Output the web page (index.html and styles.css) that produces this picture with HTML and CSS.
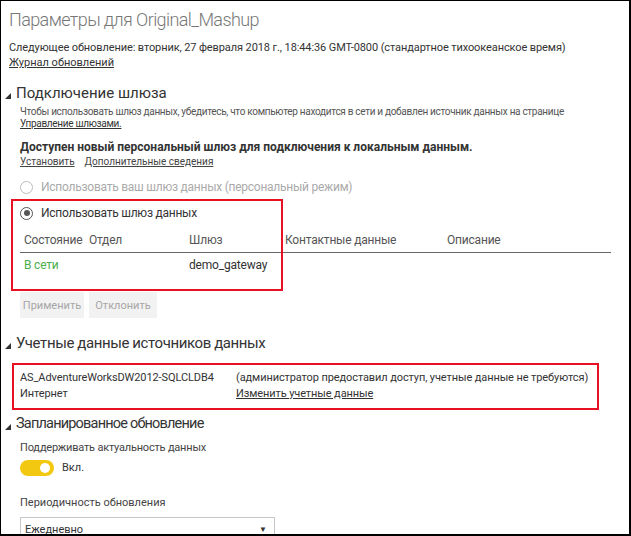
FILE: index.html
```html
<!DOCTYPE html>
<html lang="ru">
<head>
<meta charset="utf-8">
<title>Параметры для Original_Mashup</title>
<link rel="stylesheet" href="styles.css">
</head>
<body>
<div class="frame">
  <h1 class="title">Параметры для Original_Mashup</h1>
  <p class="next">Следующее обновление: вторник, 27 февраля 2018 г., 18:44:36 GMT-0800 (стандартное тихоокеанское время)</p>
  <a class="link next-link" href="#">Журнал обновлений</a>

  <h2 class="sec sec-gw"><svg class="tri" width="6" height="6" viewBox="0 0 6 6"><polygon points="0,6 6,0 6,6" fill="#333"/></svg>Подключение шлюза</h2>
  <div class="body">
    <p class="desc">Чтобы использовать шлюз данных, убедитесь, что компьютер находится в сети и добавлен источник данных на странице</p>
    <a class="desc-link" href="#">Управление шлюзами.</a>
    <p class="notice">Доступен новый персональный шлюз для подключения к локальным данным.</p>
    <div class="notice-links"><a href="#">Установить</a><a href="#">Дополнительные сведения</a></div>

    <label class="radio disabled"><span class="dot"></span>Использовать ваш шлюз данных (персональный режим)</label>
    <label class="radio checked"><span class="dot"></span>Использовать шлюз данных</label>

    <div class="table">
      <div class="row head">
        <span>Состояние</span><span>Отдел</span><span>Шлюз</span><span>Контактные данные</span><span>Описание</span>
      </div>
      <div class="row">
        <span class="online">В сети</span><span></span><span>demo_gateway</span><span></span><span></span>
      </div>
    </div>

    <div class="buttons">
      <button class="btn btn-apply">Применить</button>
      <button class="btn btn-reject">Отклонить</button>
    </div>
  </div>

  <h2 class="sec sec-cred"><svg class="tri" width="6" height="6" viewBox="0 0 6 6"><polygon points="0,6 6,0 6,6" fill="#333"/></svg>Учетные данные источников данных</h2>
  <div class="cred">
    <span>AS_AdventureWorksDW2012-SQLCLDB4</span>
    <span>(администратор предоставил доступ, учетные данные не требуются)</span>
    <span>Интернет</span>
    <a href="#">Изменить учетные данные</a>
  </div>

  <h2 class="sec sec-sched"><svg class="tri" width="6" height="6" viewBox="0 0 6 6"><polygon points="0,6 6,0 6,6" fill="#333"/></svg>Запланированное обновление</h2>
  <div class="body">
    <p class="field-label keep">Поддерживать актуальность данных</p>
    <div class="toggle-row"><span class="toggle"><span class="knob"></span></span><span>Вкл.</span></div>
    <p class="field-label freq">Периодичность обновления</p>
    <div class="select"><span>Ежедневно</span><span class="arrow">▼</span></div>
  </div>

  <div class="highlight"></div>
</div>
</body>
</html>
```

FILE: styles.css
```css
* { box-sizing: border-box; }
html, body { margin: 0; padding: 0; background: #fff; }
body { font-family: "Roboto", "Open Sans", sans-serif; color: #333; }

.frame {
  position: relative;
  width: 631px;
  height: 536px;
  border: 1px solid #000;
  border-right-width: 2px;
  border-bottom-width: 2px;
  overflow: hidden;
  padding-left: 8px;
}

p { margin: 0; }
a { color: #333; }

.title {
  margin: 5px 0 0;
  font-size: 18px;
  font-weight: 300;
  letter-spacing: -0.6px;
  line-height: 28px;
  color: #777;
}

.next {
  margin-top: 6px;
  font-size: 11px;
  letter-spacing: -0.1px;
  line-height: 15px;
  white-space: nowrap;
}
.next-link {
  display: block;
  font-size: 11px;
  line-height: 15px;
}

.sec {
  display: flex;
  align-items: center;
  gap: 5px;
  margin: 12px 0 0 -4px;
  font-size: 15px;
  font-weight: 400;
  line-height: 22px;
  color: #333;
  white-space: nowrap;
}
.tri { margin-top: 5px; }

.body { padding-left: 11px; }

.desc {
  margin-top: 2px;
  font-size: 10px;
  letter-spacing: -0.3px;
  line-height: 12px;
  color: #555;
  white-space: nowrap;
}
.desc-link {
  display: block;
  font-size: 10px;
  letter-spacing: -0.3px;
  line-height: 12px;
  color: #333;
}

.notice {
  margin-top: 9px;
  font-size: 12px;
  font-weight: 700;
  line-height: 16px;
  white-space: nowrap;
}
.notice-links {
  display: flex;
  gap: 10px;
  font-size: 10px;
  line-height: 14px;
}
.notice-links a { color: #444; }

.radio {
  display: flex;
  align-items: center;
  gap: 8px;
  font-size: 12px;
  letter-spacing: -0.25px;
  line-height: 18px;
  white-space: nowrap;
}
.radio .dot {
  width: 13px;
  height: 13px;
  border-radius: 50%;
  border: 1.5px solid #999;
  display: flex;
  align-items: center;
  justify-content: center;
}
.radio.disabled { margin-top: 9px; color: #aaa; }
.radio.disabled .dot { border-color: #bbb; }
.radio.checked { margin-top: 8px; color: #333; }
.radio.checked .dot { border-color: #555; }
.radio.checked .dot::after {
  content: "";
  width: 6px;
  height: 6px;
  border-radius: 50%;
  background: #555;
}

.table { margin-top: 5px; width: 591px; }
.row {
  display: grid;
  grid-template-columns: 65px 100px 96px 162px 1fr;
  padding-left: 4px;
  font-size: 12px;
  letter-spacing: -0.2px;
  line-height: 18px;
  height: 24px;
  align-items: center;
  white-space: nowrap;
}
.row.head { height: 26px; border-bottom: 1px solid #666; color: #555; }
.online { color: #4cae4c; }

.buttons {
  display: flex;
  gap: 5px;
  margin-top: 15px;
}
.btn {
  font-family: inherit;
  font-size: 11px;
  color: #a6a6a6;
  background: #f2f2f2;
  border: none;
  height: 26px;
  padding: 0;
}
.btn-apply { width: 64px; }
.btn-reject { width: 68px; }

.sec-cred { margin-top: 14px; letter-spacing: -0.4px; }

.cred {
  display: grid;
  grid-template-columns: 216px 1fr;
  margin: 9px 30px 0 3px;
  border: 2px solid #e81123;
  padding: 5px 6px 6px 6px;
  font-size: 11px;
  letter-spacing: -0.1px;
  line-height: 16px;
  white-space: nowrap;
}

.sec-sched { margin-top: 3px; font-size: 14.5px; letter-spacing: -0.8px; }

.field-label {
  margin-top: 5px;
  font-size: 11px;
  line-height: 16px;
  color: #444;
}
.keep { letter-spacing: -0.2px; }
.toggle-row {
  display: flex;
  align-items: center;
  gap: 8px;
  margin-top: 4px;
  font-size: 11px;
  line-height: 16px;
}
.toggle {
  width: 34px;
  height: 16px;
  border-radius: 8px;
  background: #f2c811;
  display: flex;
  align-items: center;
  justify-content: flex-end;
  padding-right: 4px;
}
.knob {
  width: 10px;
  height: 10px;
  border-radius: 50%;
  background: #fff;
}
.freq { margin-top: 19px; }
.select {
  display: flex;
  align-items: center;
  justify-content: space-between;
  width: 255px;
  height: 24px;
  margin-top: 6px;
  border: 1px solid #c8c8c8;
  padding: 0 7px 0 4px;
  font-size: 11px;
}
.arrow { font-size: 8px; color: #333; }

.highlight {
  position: absolute;
  left: 10px;
  top: 198px;
  width: 272px;
  height: 92px;
  border: 2px solid #e81123;
  pointer-events: none;
}
```
